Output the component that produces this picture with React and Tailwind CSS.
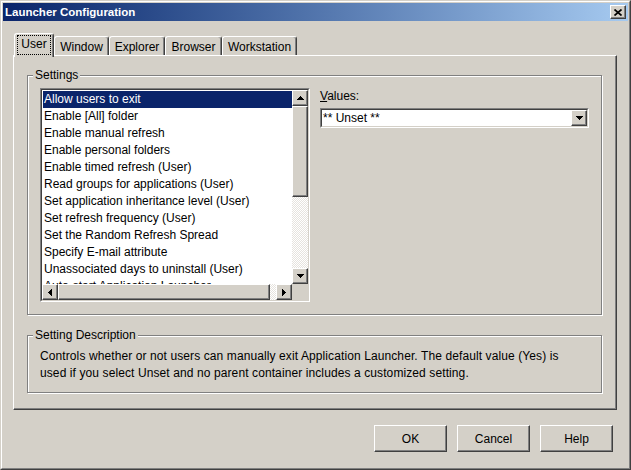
import React from "react";

const raised =
  "border border-t-white border-l-white border-r-[#404040] border-b-[#404040] shadow-[inset_-1px_-1px_0_#808080] bg-[#d4d0c8]";

const items = [
  "Allow users to exit",
  "Enable [All] folder",
  "Enable manual refresh",
  "Enable personal folders",
  "Enable timed refresh (User)",
  "Read groups for applications (User)",
  "Set application inheritance level (User)",
  "Set refresh frequency (User)",
  "Set the Random Refresh Spread",
  "Specify E-mail attribute",
  "Unassociated days to uninstall (User)",
  "Auto-start Application Launcher",
];

const Arrow = ({ dir }) => {
  const pts = {
    up: "3.5,0 7,4 0,4",
    down: "0,0 7,0 3.5,4",
    left: "4,0 4,7 0,3.5",
    right: "0,0 4,3.5 0,7",
  }[dir];
  const vertical = dir === "up" || dir === "down";
  return (
    <svg
      width={vertical ? 7 : 4}
      height={vertical ? 4 : 7}
      viewBox={vertical ? "0 0 7 4" : "0 0 4 7"}
      shapeRendering="crispEdges"
    >
      <polygon points={pts} fill="#000" />
    </svg>
  );
};

const ScrollBtn = ({ dir }) => (
  <div className={`${raised} w-[16px] h-[16px] flex items-center justify-center shrink-0`}>
    <Arrow dir={dir} />
  </div>
);

const track =
  "bg-[image:repeating-conic-gradient(#ffffff_0_25%,#e6e3de_0_50%)] bg-[length:2px_2px]";

const Group = ({ label, className, children }) => (
  <div
    className={`relative border border-[#808080] shadow-[1px_1px_0_#ffffff,inset_1px_1px_0_#ffffff] ${className}`}
  >
    <span className="absolute left-[5px] top-[-8px] px-[2px] bg-[#d4d0c8] text-[12px] leading-[14px]">
      {label}
    </span>
    {children}
  </div>
);

const Tab = ({ label, w }) => (
  <div
    className={`h-[19px] border-t border-l border-white border-r border-r-[#404040] shadow-[inset_-1px_0_0_#808080] rounded-t-[3px] bg-[#d4d0c8] text-center text-[12px] leading-[14px] pt-[3px] ${w}`}
  >
    {label}
  </div>
);

export default function App() {
  return (
    <div className="w-[631px] h-[470px] font-['Liberation_Sans',Arial,sans-serif] text-black bg-[#d4d0c8] border border-t-[#d4d0c8] border-l-[#d4d0c8] border-r-[#404040] border-b-[#404040]">
      <div className="w-full h-full border border-t-white border-l-white border-r-[#808080] border-b-[#808080] p-[1px] flex flex-col">
        {/* title bar */}
        <div className="h-[18px] shrink-0 bg-linear-to-r from-[#0a246a] to-[#a6caf0] flex items-center justify-between pl-[2px] pr-[2px]">
          <span className="text-white font-bold text-[11.5px] leading-[14px]">
            Launcher Configuration
          </span>
          <div className={`${raised} w-[16px] h-[14px] flex items-center justify-center`}>
            <svg width="8" height="7" viewBox="0 0 8 7">
              <path d="M0.5 0.5 L7.5 6.5 M7.5 0.5 L0.5 6.5" stroke="#000" strokeWidth="1.7" />
            </svg>
          </div>
        </div>

        {/* tabs */}
        <div className="mt-[12px] ml-[10px] h-[22px] flex items-end shrink-0">
          <div className="relative z-10 -mb-[2px] ml-[1px] w-[40px] h-[24px] border-t border-l border-white border-r border-r-[#404040] shadow-[inset_-1px_0_0_#808080] rounded-t-[3px] bg-[#d4d0c8] pt-[1px] pl-[2px] pr-[2px]">
            <div className="h-[20px] border border-dotted border-black text-center text-[12px] leading-[17px]">
              User
            </div>
          </div>
          <Tab label="Window" w="w-[55px]" />
          <Tab label="Explorer" w="w-[56px]" />
          <Tab label="Browser" w="w-[57px]" />
          <Tab label="Workstation" w="w-[75px]" />
        </div>

        {/* tab panel */}
        <div className="ml-[10px] w-[604px] h-[355px] shrink-0 border border-t-white border-l-white border-r-[#404040] border-b-[#404040] shadow-[inset_-1px_-1px_0_#808080] pt-[19px] pl-[13px]">
          <Group label="Settings" className="w-[575px] h-[240px] pt-[12px] pl-[12px] flex gap-[10px]">
            {/* list box */}
            <div className="w-[270px] h-[214px] shrink-0 border border-t-[#808080] border-l-[#808080] border-r-white border-b-white">
              <div className="w-full h-full border border-t-[#404040] border-l-[#404040] border-r-[#d4d0c8] border-b-[#d4d0c8] bg-white grid grid-cols-[250px_16px] grid-rows-[194px_16px]">
                <div className="overflow-hidden pt-[1px] pl-[1px]">
                  {items.map((it, i) => (
                    <div
                      key={it}
                      className={`h-[17px] leading-[17px] text-[12px] pl-[1px] whitespace-nowrap ${
                        i === 0 ? "bg-[#0a246a] text-white" : ""
                      }`}
                    >
                      {it}
                    </div>
                  ))}
                </div>
                <div className="flex flex-col bg-[#d4d0c8]">
                  <ScrollBtn dir="up" />
                  <div className={`${raised} h-[91px] shrink-0`} />
                  <div className={`flex-1 ${track}`} />
                  <ScrollBtn dir="down" />
                </div>
                <div className="flex bg-[#d4d0c8]">
                  <ScrollBtn dir="left" />
                  <div className={`${raised} w-[212px] shrink-0`} />
                  <div className={`flex-1 ${track}`} />
                  <ScrollBtn dir="right" />
                </div>
                <div className="bg-[#d4d0c8]" />
              </div>
            </div>

            {/* values */}
            <div className="w-[269px] pt-[1px]">
              <div className="text-[12px] leading-[14px]">
                <span className="underline">V</span>alues:
              </div>
              <div className="mt-[5px] w-[269px] h-[20px] border border-t-[#808080] border-l-[#808080] border-r-white border-b-white">
                <div className="w-full h-full border border-t-[#404040] border-l-[#404040] border-r-[#d4d0c8] border-b-[#d4d0c8] bg-white flex items-center justify-between">
                  <span className="pl-[1px] text-[12px] leading-[14px]">** Unset **</span>
                  <ScrollBtn dir="down" />
                </div>
              </div>
            </div>
          </Group>

          <Group label="Setting Description" className="mt-[20px] w-[575px] h-[58px] pt-[12px] pl-[12px]">
            <p className="text-[12px] leading-[17px] tracking-[0.1px] whitespace-nowrap">
              Controls whether or not users can manually exit Application Launcher. The default value (Yes) is
              <br />
              used if you select Unset and no parent container includes a customized setting.
            </p>
          </Group>
        </div>

        {/* buttons */}
        <div className="mt-[15px] flex justify-end gap-[10px] pr-[15px]">
          {["OK", "Cancel", "Help"].map((b) => (
            <div
              key={b}
              className={`${raised} w-[73px] h-[27px] flex items-center justify-center text-[12px]`}
            >
              {b}
            </div>
          ))}
        </div>
      </div>
    </div>
  );
}
